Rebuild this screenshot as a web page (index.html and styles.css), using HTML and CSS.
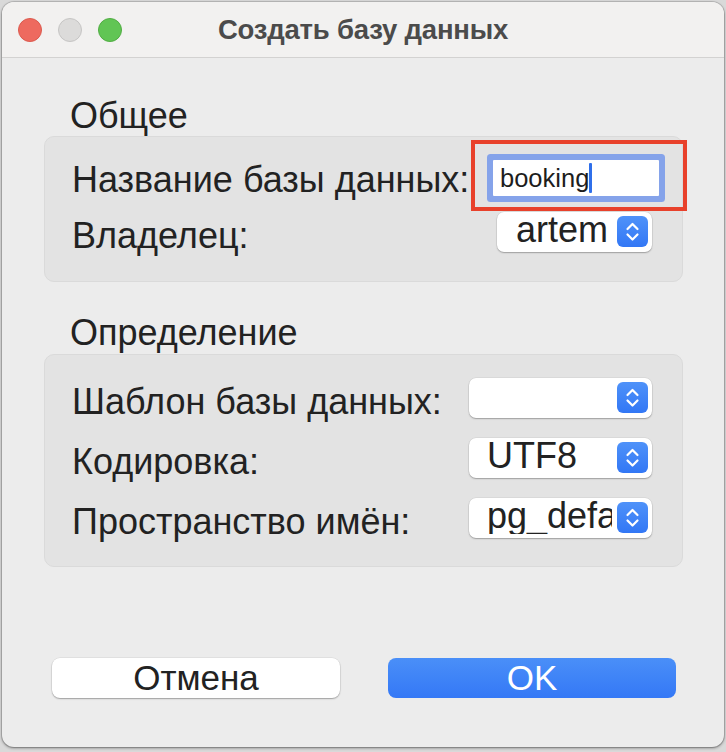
FILE: index.html
```html
<!DOCTYPE html>
<html lang="ru">
<head>
<meta charset="utf-8">
<title>Создать базу данных</title>
<link rel="stylesheet" href="styles.css">
</head>
<body>
<div class="window">
  <div class="titlebar">
    <div class="lights">
      <span class="light red"></span>
      <span class="light gray"></span>
      <span class="light green"></span>
    </div>
    <div class="title">Создать базу данных</div>
  </div>
  <div class="content">
    <div class="heading h1">Общее</div>
    <div class="group g1">
      <div class="row r-name">
        <span class="label">Название базы данных:</span>
        <div class="field-wrap">
          <div class="field"><span class="field-text">booking</span><span class="caret"></span></div>
          <div class="annot"></div>
        </div>
      </div>
      <div class="row r-owner">
        <span class="label">Владелец:</span>
        <div class="popup p-owner">
          <span class="popup-text">artem</span>
          <span class="stepper"><svg width="31" height="31" viewBox="0 0 31 31"><path d="M10.5 13 L15.5 8 L20.5 13 M10.5 18.5 L15.5 23.5 L20.5 18.5" fill="none" stroke="#fff" stroke-width="2.2" stroke-linecap="round" stroke-linejoin="round"/></svg></span>
        </div>
      </div>
    </div>
    <div class="heading h2">Определение</div>
    <div class="group g2">
      <div class="row r-pop">
        <span class="label">Шаблон базы данных:</span>
        <div class="popup">
          <span class="popup-text"></span>
          <span class="stepper"><svg width="31" height="31" viewBox="0 0 31 31"><path d="M10.5 13 L15.5 8 L20.5 13 M10.5 18.5 L15.5 23.5 L20.5 18.5" fill="none" stroke="#fff" stroke-width="2.2" stroke-linecap="round" stroke-linejoin="round"/></svg></span>
        </div>
      </div>
      <div class="row r-pop">
        <span class="label">Кодировка:</span>
        <div class="popup">
          <span class="popup-text">UTF8</span>
          <span class="stepper"><svg width="31" height="31" viewBox="0 0 31 31"><path d="M10.5 13 L15.5 8 L20.5 13 M10.5 18.5 L15.5 23.5 L20.5 18.5" fill="none" stroke="#fff" stroke-width="2.2" stroke-linecap="round" stroke-linejoin="round"/></svg></span>
        </div>
      </div>
      <div class="row r-pop">
        <span class="label">Пространство имён:</span>
        <div class="popup">
          <span class="popup-text clip">pg_default</span>
          <span class="stepper"><svg width="31" height="31" viewBox="0 0 31 31"><path d="M10.5 13 L15.5 8 L20.5 13 M10.5 18.5 L15.5 23.5 L20.5 18.5" fill="none" stroke="#fff" stroke-width="2.2" stroke-linecap="round" stroke-linejoin="round"/></svg></span>
        </div>
      </div>
    </div>
    <div class="buttons">
      <button class="btn cancel">Отмена</button>
      <button class="btn ok">OK</button>
    </div>
  </div>
</div>
</body>
</html>
```
FILE: styles.css
```css
html, body {
  margin: 0;
  padding: 0;
}
body {
  width: 726px;
  height: 752px;
  background: #d9d9d9;
  font-family: "Liberation Sans", Arial, sans-serif;
  overflow: hidden;
}
.window {
  margin: 2px 2px 0 2px;
  width: 722px;
  height: 745px;
  border-radius: 12px;
  background: #ececec;
  overflow: hidden;
  box-shadow: 0 1px 3px rgba(0,0,0,0.45), 0 0 0 1px rgba(0,0,0,0.12);
  display: flex;
  flex-direction: column;
}
.titlebar {
  height: 55px;
  flex: none;
  background: #f2f1f0;
  border-bottom: 1px solid #d3d2d1;
  display: flex;
  align-items: center;
  position: relative;
}
.lights {
  display: flex;
  gap: 16px;
  padding-left: 16px;
  position: relative;
  z-index: 1;
}
.light {
  width: 24px;
  height: 24px;
  border-radius: 50%;
  box-sizing: border-box;
}
.red { background: #ee6a5f; border: 1px solid #dc5a4e; }
.gray { background: #dcdbda; border: 1px solid #c6c5c4; }
.green { background: #61c554; border: 1px solid #51ad43; }
.title {
  position: absolute;
  left: 0;
  right: 0;
  text-align: center;
  font-weight: bold;
  font-size: 27.5px;
  color: #4b4b4b;
  letter-spacing: -0.2px;
}
.content {
  padding: 0 41px 0 42px;
  display: flex;
  flex-direction: column;
}
.heading {
  font-size: 36px;
  line-height: 40px;
  height: 40px;
  color: #222;
  padding-left: 26px;
}
.h1 { margin-top: 38px; }
.h2 { margin-top: 31px; height: 41px; }
.group {
  background: #e3e3e3;
  border: 1px solid #dadada;
  border-radius: 10px;
  box-sizing: border-box;
  padding: 0 30px 0 27px;
  display: flex;
  flex-direction: column;
}
.g1 { height: 146px; padding-top: 17px; }
.g2 { height: 213px; padding-top: 23px; gap: 20px; }
.row {
  display: flex;
  justify-content: space-between;
  align-items: center;
}
.label {
  font-size: 36px;
  color: #222;
  line-height: 40px;
  white-space: nowrap;
}
.r-name { height: 48px; }
.r-name .label { padding-top: 4px; }
.r-owner { height: 40px; margin-top: 10px; }
.r-owner .label { padding-top: 8px; }
.r-pop { height: 40px; }
.r-pop .label { padding-top: 7px; }
.field-wrap {
  position: relative;
  margin-right: -7px;
}
.field {
  width: 166px;
  height: 36px;
  box-sizing: border-box;
  background: #fff;
  box-shadow: 0 0 0 6px #85a3ea;
  border-radius: 1px;
  display: flex;
  align-items: center;
  padding-left: 7px;
}
.field-text {
  font-size: 25.5px;
  color: #1d1d1d;
  line-height: 30px;
}
.caret {
  width: 3px;
  height: 30px;
  background: #2f6fea;
  border-radius: 1px;
}
.annot {
  position: absolute;
  left: -22px;
  top: -20px;
  width: 216px;
  height: 71px;
  box-sizing: border-box;
  border: 4px solid #e8412b;
}
.popup {
  position: relative;
  width: 183px;
  height: 40px;
  box-sizing: border-box;
  background: #fff;
  border-radius: 7px;
  box-shadow: 0 1px 1.5px rgba(0,0,0,0.28), 0 0 0 0.5px rgba(0,0,0,0.08);
  display: flex;
  align-items: center;
  padding-left: 18px;
}
.p-owner { width: 155px; padding-left: 19px; }
.popup-text {
  font-size: 36px;
  color: #222;
  line-height: 34px;
  white-space: nowrap;
  margin-top: -4px;
}
.popup-text.clip {
  display: block;
  width: 125px;
  overflow: hidden;
  line-height: 44px;
  height: 40px;
  margin-top: 0;
  position: relative;
  top: -4px;
}
.stepper {
  position: absolute;
  right: 4px;
  top: 4px;
  width: 31px;
  height: 31px;
  border-radius: 6px;
  background: linear-gradient(#4f92f9, #3277f5);
  display: block;
}
.stepper svg { display: block; }
.buttons {
  margin-top: 91px;
  padding-left: 8px;
  display: flex;
  gap: 48px;
}
.btn {
  width: 288px;
  height: 40px;
  border: none;
  border-radius: 8px;
  font-family: "Liberation Sans", Arial, sans-serif;
  font-size: 35px;
  line-height: 40px;
  padding: 0;
}
.cancel {
  background: #fff;
  color: #222;
  box-shadow: 0 1px 1.5px rgba(0,0,0,0.3), 0 0 0 0.5px rgba(0,0,0,0.08);
}
.ok {
  background: linear-gradient(#4a8ff8, #3478f6);
  color: #fff;
}
```
